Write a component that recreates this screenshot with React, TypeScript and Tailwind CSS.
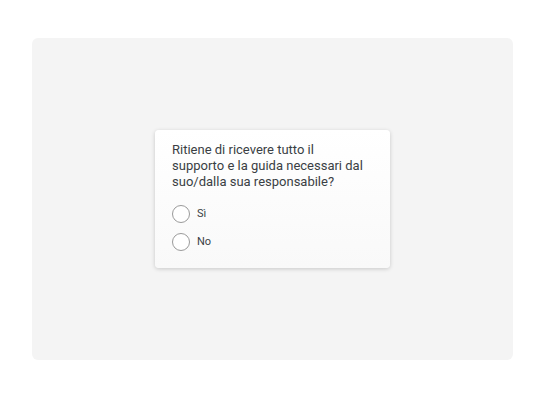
export default function App() {
  const options = ["Sì", "No"];
  return (
    <div className="w-[546px] h-[400px] bg-white pt-[38px] pl-[32px] font-['Roboto',sans-serif]">
      <div className="w-[481px] h-[322px] rounded-md bg-[#f4f4f4] flex items-center justify-center">
        <div className="w-[235px] h-[138px] rounded bg-gradient-to-b from-white to-[#f9f9f9] shadow-[0_1px_4px_rgba(0,0,0,0.18)] pl-[17px] pt-[12px]">
          <p className="whitespace-nowrap text-[13px] leading-[16px] text-[#3a3f44]">
            Ritiene di ricevere tutto il
            <br />
            supporto e la guida necessari dal
            <br />
            suo/dalla sua responsabile?
          </p>
          <div className="mt-[15px] flex flex-col gap-[10px]">
            {options.map((opt) => (
              <label key={opt} className="flex items-center gap-[7px]">
                <span className="w-[18px] h-[18px] rounded-full border border-[#9a9a9a] bg-white" />
                <span className="text-[11px] text-[#3a3f44]">{opt}</span>
              </label>
            ))}
          </div>
        </div>
      </div>
    </div>
  );
}
